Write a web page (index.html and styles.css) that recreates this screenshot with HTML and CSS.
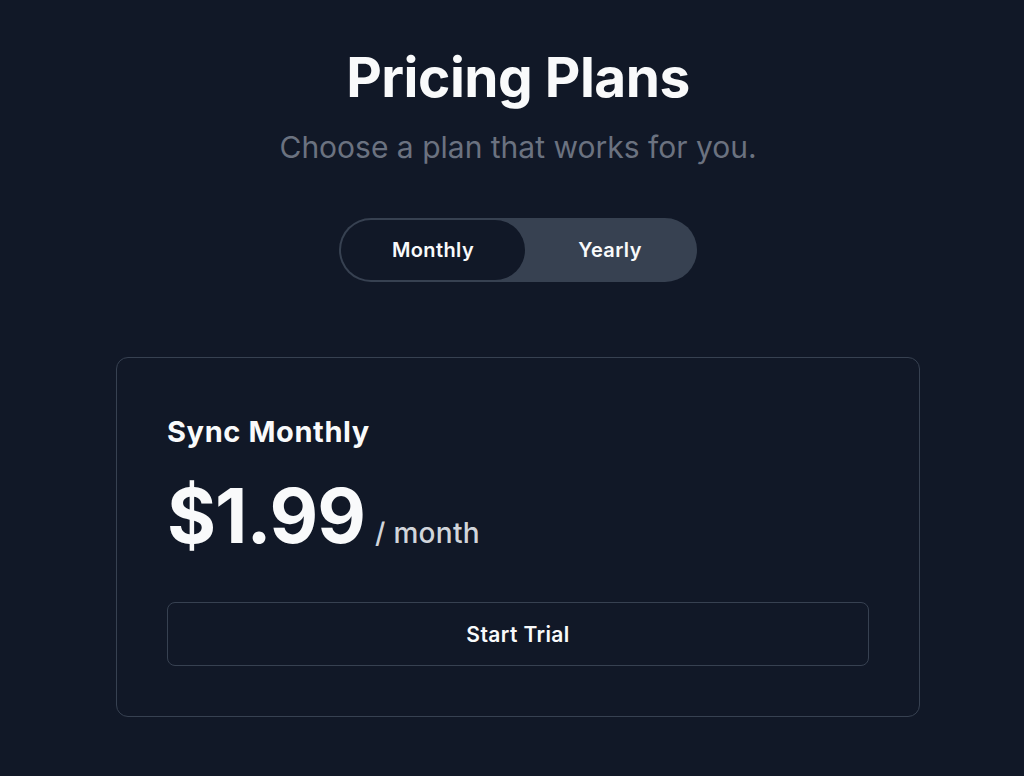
FILE: index.html
```html
<!DOCTYPE html>
<html lang="en">
<head>
<meta charset="utf-8">
<title>Pricing Plans</title>
<link rel="stylesheet" href="styles.css">
</head>
<body>
<main class="page">
  <h1 class="title">Pricing Plans</h1>
  <p class="subtitle">Choose a plan that works for you.</p>
  <div class="toggle">
    <button class="toggle-btn active">Monthly</button>
    <button class="toggle-btn">Yearly</button>
  </div>
  <section class="card">
    <h2 class="plan-name">Sync Monthly</h2>
    <div class="price-row">
      <span class="price">$1.99</span>
      <span class="period">/ month</span>
    </div>
    <button class="cta">Start Trial</button>
  </section>
</main>
</body>
</html>
```
FILE: styles.css
```css
html, body {
  margin: 0;
  padding: 0;
  background: #111827;
  height: 100%;
}
body {
  font-family: Inter, "Noto Sans", sans-serif;
  color: #f9fafb;
}
.page {
  display: flex;
  flex-direction: column;
  align-items: center;
  padding: 44px 0 0 12px;
}
.title {
  margin: 0;
  font-size: 55px;
  font-weight: 700;
  line-height: 66px;
  letter-spacing: -0.5px;
  color: #f9fafb;
}
.subtitle {
  margin: 18px 0 0;
  font-size: 30px;
  line-height: 38px;
  color: #6b7280;
}
.toggle {
  margin-top: 52px;
  display: flex;
  width: 358px;
  height: 64px;
  box-sizing: border-box;
  background: #374151;
  border-radius: 32px;
  padding: 2px;
}
.toggle-btn {
  flex: 1;
  border: none;
  background: transparent;
  color: #f9fafb;
  font-family: inherit;
  font-size: 20px;
  font-weight: 600;
  letter-spacing: 0.4px;
  border-radius: 30px;
  padding: 0;
}
.toggle-btn.active {
  background: #111827;
  flex: 0 0 184px;
}
.card {
  margin-top: 75px;
  width: 804px;
  box-sizing: border-box;
  border: 1.5px solid #374151;
  border-radius: 12px;
  padding: 56px 50px 50px;
}
.plan-name {
  margin: 0;
  font-size: 29px;
  font-weight: 700;
  line-height: 36px;
  letter-spacing: 0.6px;
}
.price-row {
  display: flex;
  align-items: baseline;
  gap: 10px;
  margin-top: 22px;
}
.price {
  font-size: 75px;
  font-weight: 700;
  line-height: 88px;
  letter-spacing: -1px;
}
.period {
  font-size: 28px;
  font-weight: 500;
  letter-spacing: 0.3px;
  color: #d1d5db;
}
.cta {
  display: block;
  width: 100%;
  height: 64px;
  margin-top: 42px;
  background: transparent;
  border: 1.5px solid #374151;
  border-radius: 8px;
  color: #f9fafb;
  font-family: inherit;
  font-size: 21px;
  font-weight: 600;
  letter-spacing: 0.4px;
}
```
